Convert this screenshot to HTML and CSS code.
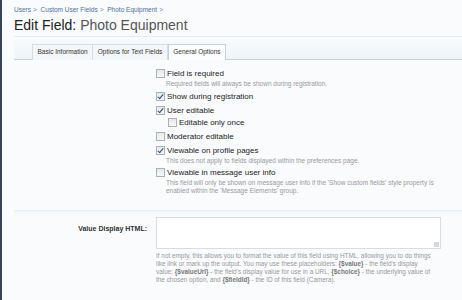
FILE: index.html
```html
<!DOCTYPE html>
<html>
<head>
<meta charset="utf-8">
<link rel="stylesheet" href="styles.css">
</head>
<body>
<div class="page">
  <nav class="crumbs">
    <a>Users</a><span class="sep">&gt;</span>
    <a>Custom User Fields</a><span class="sep">&gt;</span>
    <a>Photo Equipment</a><span class="sep">&gt;</span>
  </nav>
  <h1 class="title"><span class="t-main">Edit Field:</span> <span class="t-sub">Photo Equipment</span></h1>

  <div class="tabstrip">
    <ul class="tabs">
      <li class="tab">Basic Information</li>
      <li class="tab">Options for Text Fields</li>
      <li class="tab active">General Options</li>
    </ul>
  </div>

  <div class="section">
    <div class="form-row">
      <div class="label-col"></div>
      <ul class="checks">
        <li class="check">
          <div class="line"><span class="box"></span><span class="lbl">Field is required</span></div>
          <p class="desc">Required fields will always be shown during registration.</p>
        </li>
        <li class="check">
          <div class="line"><span class="box on"></span><span class="lbl">Show during registration</span></div>
        </li>
        <li class="check">
          <div class="line"><span class="box on"></span><span class="lbl">User editable</span></div>
          <ul class="checks nested">
            <li class="check">
              <div class="line"><span class="box"></span><span class="lbl">Editable only once</span></div>
            </li>
          </ul>
        </li>
        <li class="check">
          <div class="line"><span class="box"></span><span class="lbl">Moderator editable</span></div>
        </li>
        <li class="check">
          <div class="line"><span class="box on"></span><span class="lbl">Viewable on profile pages</span></div>
          <p class="desc">This does not apply to fields displayed within the preferences page.</p>
        </li>
        <li class="check">
          <div class="line"><span class="box"></span><span class="lbl">Viewable in message user info</span></div>
          <p class="desc">This field will only be shown on message user info if the 'Show custom fields' style property is enabled within the 'Message Elements' group.</p>
        </li>
      </ul>
    </div>
  </div>

  <div class="section section-2">
    <div class="form-row">
      <div class="label-col"><span class="field-label">Value Display HTML:</span></div>
      <div class="ctrl">
        <div class="textarea"><span class="grip"></span></div>
        <p class="help">If not empty, this allows you to format the value of this field using HTML, allowing you to do things<br>like link or mark up the output. You may use these placeholders: <b>{$value}</b> - the field's display<br>value; <b>{$valueUrl}</b> - the field's display value for use in a URL, <b>{$choice}</b> - the underlying value of<br>the chosen option, and <b>{$fieldId}</b> - the ID of this field (Camera).</p>
      </div>
    </div>
  </div>
</div>
</body>
</html>
```

FILE: styles.css
```css
* { box-sizing: border-box; }
html, body { margin: 0; padding: 0; }
body {
  width: 462px;
  height: 300px;
  overflow: hidden;
  background: #f9fbfd;
  border-left: 2px solid #34475d;
  font-family: "Liberation Sans", Arial, sans-serif;
  color: #222;
}
.page { padding-left: 12px; }

.crumbs {
  padding-top: 6px;
  font-size: 6.5px;
  line-height: 8px;
  color: #4d6e96;
  white-space: nowrap;
}
.crumbs a { color: #4d6e96; }
.crumbs .sep { margin: 0 2px 0 2px; color: #6f86a3; }

.title {
  margin: 3px 0 0 0;
  font-size: 14px;
  line-height: 17px;
  font-weight: normal;
  white-space: nowrap;
}
.t-main { color: #222; }
.t-sub { color: #555; }

.tabstrip {
  margin-top: 2px;
  height: 24px;
  border-top: 1px solid #e4ebf1;
  border-bottom: 1px solid #c3d1dc;
  background: linear-gradient(#f9fbfd, #eef4f8);
  padding: 7px 0 0 18px;
}
.tabs {
  list-style: none;
  margin: 0;
  padding: 0;
  display: flex;
  height: 16px;
}
.tab {
  height: 16px;
  padding: 0 4.5px;
  border: 1px solid #d3dee7;
  border-bottom: none;
  font-size: 6.5px;
  line-height: 14px;
  color: #333;
  background: #f3f7fa;
  white-space: nowrap;
}
.tab + .tab { border-left: none; }
.tab.active {
  background: #fdfeff;
  border-color: #c3d1dc;
  border-left: 1px solid #c3d1dc;
}

.form-row {
  display: grid;
  grid-template-columns: 133px 1fr;
  column-gap: 9px;
}
.label-col { text-align: right; }

.section { padding-top: 8px; }

.checks {
  list-style: none;
  margin: 0;
  padding: 0;
}
.check { margin-bottom: 3px; }
.line {
  display: flex;
  align-items: center;
  height: 11px;
}
.box {
  width: 9px;
  height: 9px;
  border: 1px solid #a9b1b9;
  background: linear-gradient(#e6e9ec, #f6f7f8);
  margin-right: 2px;
  position: relative;
  flex: none;
}
.box.on::after {
  content: "";
  position: absolute;
  left: 2px;
  top: 0px;
  width: 2px;
  height: 5px;
  border-right: 1.3px solid #2f4a6b;
  border-bottom: 1.3px solid #2f4a6b;
  transform: rotate(40deg);
}
.lbl {
  font-size: 8px;
  color: #222;
  white-space: nowrap;
}
.nested { margin: 1px 0 0 12px; }
.nested .check { margin-bottom: 0; }
.desc {
  margin: 1px 0 0 10px;
  font-size: 6.5px;
  line-height: 7.5px;
  color: #9a9a9a;
  width: 280px;
}

.section-2 {
  margin-top: 13px;
  border-top: 1px solid #e9eff4;
  background: linear-gradient(#f3f7fa, #f9fbfd 6px);
  padding-top: 6px;
}
.field-label {
  display: inline-block;
  padding-top: 3px;
  font-size: 7px;
  font-weight: bold;
  color: #333;
}
.textarea {
  width: 285px;
  height: 32px;
  border: 1px solid #d8dde2;
  background: #fff;
  position: relative;
}
.grip {
  position: absolute;
  right: 1px;
  bottom: 1px;
  width: 5px;
  height: 5px;
  background:
    radial-gradient(circle, #aaa 0.6px, transparent 0.8px) 0 0 / 2px 2px;
}
.help {
  margin: 3px 0 0 0;
  font-size: 6.4px;
  line-height: 8px;
  color: #999;
  white-space: nowrap;
}
.help b { color: #777; }
```
